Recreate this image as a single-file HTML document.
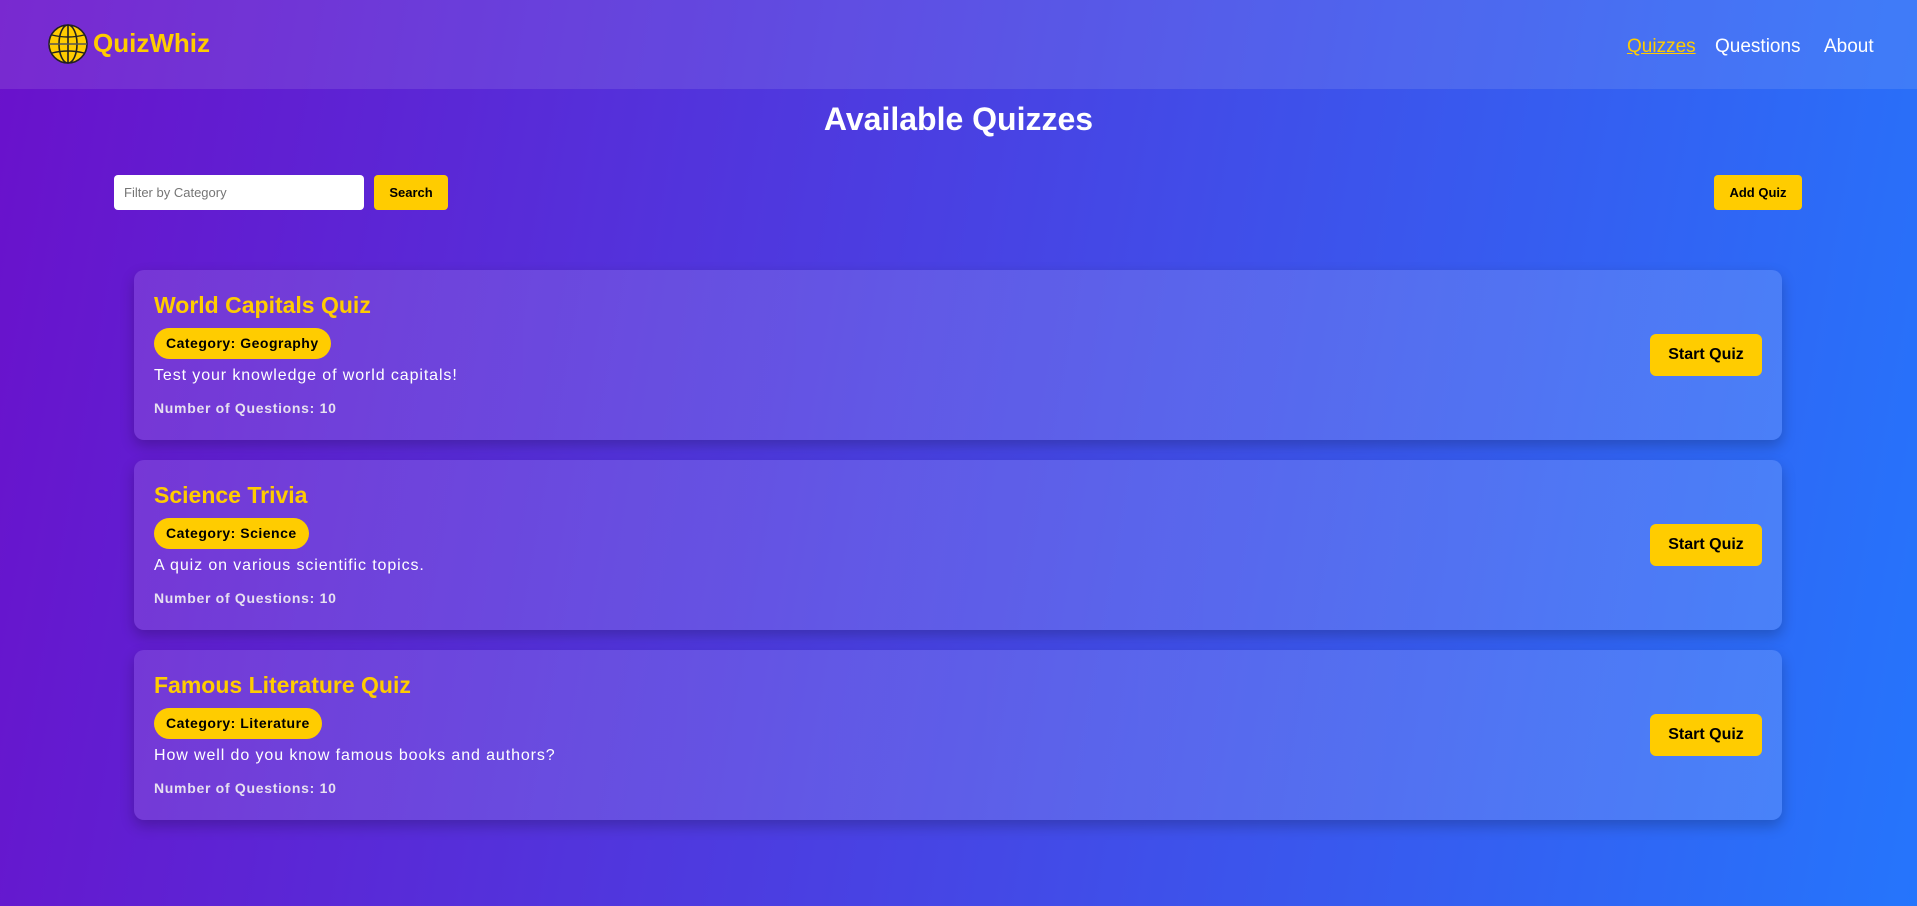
<!DOCTYPE html>
<html><head><meta charset="utf-8"><style>
*{margin:0;padding:0;box-sizing:border-box}
html,body{width:1917px;height:906px;overflow:hidden}
body{font-family:"Liberation Sans",sans-serif;background:linear-gradient(100deg,#6a11cb 0%,#2575fc 100%);color:#fff;position:relative}
header{position:absolute;left:0;top:0;width:1917px;height:89px;background:rgba(255,255,255,0.1)}
.logo{position:absolute;left:48px;top:24px;width:40px;height:40px}
.brand{position:absolute;left:93px;top:28px;font-size:26px;font-weight:bold;color:#ffcc00}
nav{position:absolute;top:36px;left:1627px;font-size:19px}
nav span{position:absolute;white-space:nowrap}
h1{position:absolute;top:101px;left:0;width:1917px;text-align:center;font-size:32px;font-weight:bold}
.inp{position:absolute;left:114px;top:175px;width:250px;height:35px;background:#fff;border-radius:4px;color:#757575;font-size:13px;padding:10px 10px}
.btn{position:absolute;background:#ffcc00;color:#000;font-weight:bold;border-radius:4px;text-align:center}
.card{position:absolute;left:134px;width:1648px;height:170px;border-radius:10px;background:linear-gradient(90deg,rgba(255,255,255,0.12),rgba(255,255,255,0.14));box-shadow:0 6px 14px rgba(0,0,0,0.22)}
.card h2{position:absolute;left:20px;top:22px;font-size:23px;color:#ffcc00;font-weight:bold}
.badge{position:absolute;left:20px;top:58px;height:31px;padding:0 12px;border-radius:16px;background:#ffcc00;color:#000;font-weight:bold;font-size:14px;line-height:31px;letter-spacing:0.5px}
.desc{position:absolute;left:20px;top:97px;font-size:16px;letter-spacing:0.9px}
.num{position:absolute;left:20px;top:130px;font-size:14px;font-weight:bold;color:#e6e0f0;letter-spacing:0.7px}
.start{left:1516px;top:64px;width:112px;height:42px;line-height:42px;font-size:16px;border-radius:6px}
</style></head><body>
<header>
<svg class="logo" viewBox="0 0 40 40"><circle cx="20" cy="20" r="19" fill="#ffcc00" stroke="#222" stroke-width="1.6"/><ellipse cx="20" cy="20" rx="9" ry="19" fill="none" stroke="#222" stroke-width="1.6"/><line x1="20" y1="1" x2="20" y2="39" stroke="#222" stroke-width="1.6"/><line x1="1" y1="20" x2="39" y2="20" stroke="#555" stroke-width="1.6"/><path d="M4 11 Q20 15 36 11 M4 29 Q20 25 36 29" fill="none" stroke="#222" stroke-width="1.4"/></svg>
<div class="brand">QuizWhiz</div>
<nav><span style="left:0;color:#ffcc00;text-decoration:underline">Quizzes</span><span style="left:88px">Questions</span><span style="left:197px">About</span></nav>
</header>
<h1>Available Quizzes</h1>
<div class="inp">Filter by Category</div>
<div class="btn" style="left:374px;top:175px;width:74px;height:35px;line-height:35px;font-size:13px">Search</div>
<div class="btn" style="left:1714px;top:175px;width:88px;height:35px;line-height:35px;font-size:13px">Add Quiz</div>

<div class="card" style="top:270px"><h2>World Capitals Quiz</h2><div class="badge">Category: Geography</div><div class="desc">Test your knowledge of world capitals!</div><div class="num">Number of Questions: 10</div><div class="btn start">Start Quiz</div></div>
<div class="card" style="top:460px"><h2>Science Trivia</h2><div class="badge">Category: Science</div><div class="desc">A quiz on various scientific topics.</div><div class="num">Number of Questions: 10</div><div class="btn start">Start Quiz</div></div>
<div class="card" style="top:650px"><h2>Famous Literature Quiz</h2><div class="badge">Category: Literature</div><div class="desc">How well do you know famous books and authors?</div><div class="num">Number of Questions: 10</div><div class="btn start">Start Quiz</div></div>
</body></html>
